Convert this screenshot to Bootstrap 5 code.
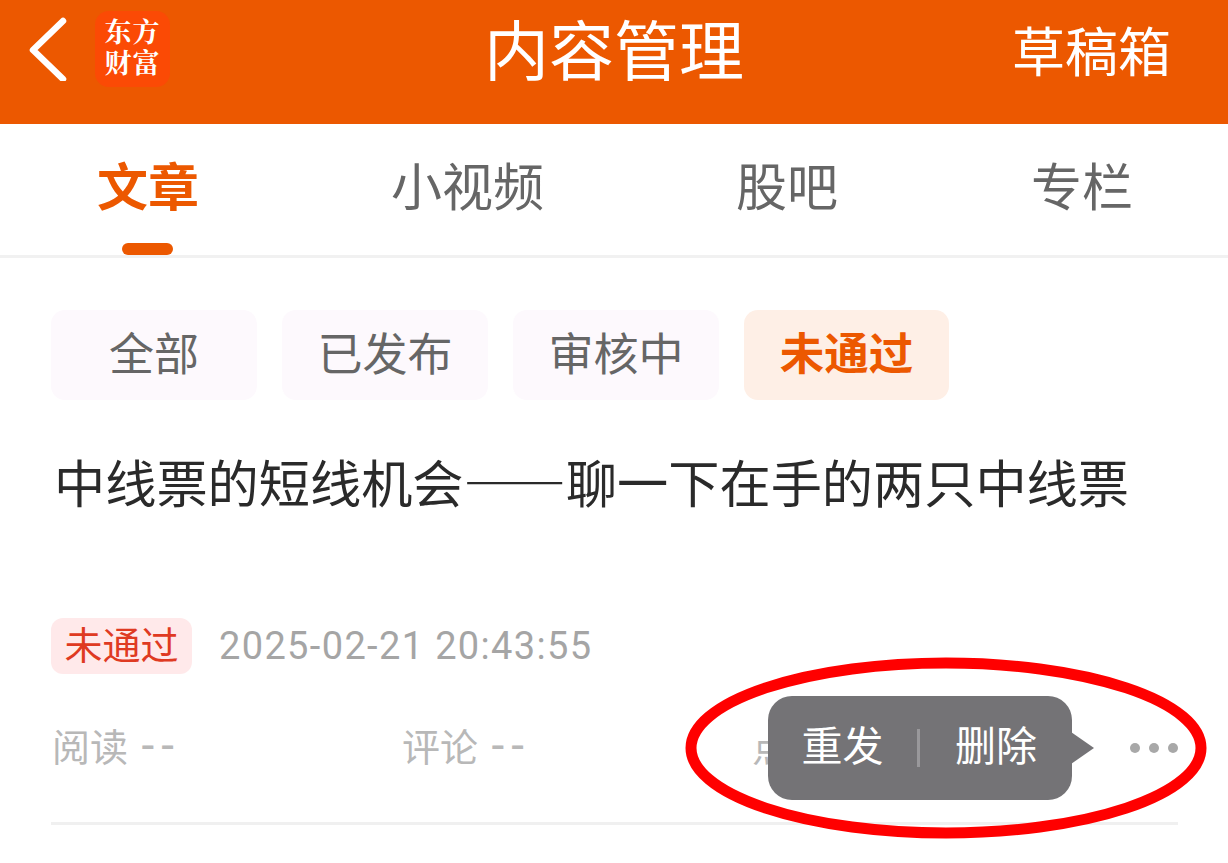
<!DOCTYPE html>
<html lang="zh-CN">
<head>
<meta charset="utf-8">
<title>内容管理</title>
<link href="https://cdn.jsdelivr.net/npm/bootstrap@5.3.0/dist/css/bootstrap.min.css" rel="stylesheet">
<style>
html,body{height:863px;overflow:hidden;background:#fff}
body{font-family:Roboto,"Noto Sans CJK SC",sans-serif;position:relative}
.cjk{font-family:"Noto Sans CJK SC",sans-serif}
.top-bar{height:124px;background:#ec5800;color:#fff;padding:0 57px 26px 28px;position:relative}
.back-ico{width:40px;height:64px;display:block}
.logo-box{width:75px;height:76px;background:#fb4a05;border-radius:14px;margin-left:27px;font:700 27px/31px "Noto Serif CJK SC","Noto Sans CJK SC",sans-serif;letter-spacing:1px;color:#fff;text-align:center;padding-top:4px}
.page-title{position:absolute;left:50%;transform:translateX(-50%);top:6px;font-size:65px;line-height:82px;margin:0;font-weight:400;white-space:nowrap}
.draft{font-size:53px;line-height:53px}
.tab-row{height:134px;border-bottom:3px solid #f1f1f1;position:relative;color:#666}
.tab-cell{font-size:51px;line-height:51px;position:absolute;top:35px}
.tab-on{color:#ec5800;font-weight:700}
.tab-on::after{content:"";position:absolute;left:25px;top:84px;width:51px;height:12px;border-radius:6px;background:#ec5800}
.chip-row{gap:25px;padding:52px 0 0 51px}
.chip-item{width:206px;height:90px;border-radius:14px;background:#fdf9fd;color:#666;font-size:45px;line-height:1;display:flex;align-items:center;justify-content:center;padding-bottom:8px}
.chip-on{background:#feefe6;color:#ec5800;font-weight:700;width:205px;font-size:44.5px}
.art-title{font-size:51.2px;line-height:60px;color:#2a2a2a;margin:51px 0 0 54px;white-space:nowrap;font-weight:400}
.meta-row{margin:107px 0 0 51px;gap:27px}
.state-tag{width:141px;height:56px;background:#ffe9ea;color:#df3a22;border-radius:12px;font-size:38px;line-height:1;display:flex;align-items:center;justify-content:center;padding-bottom:6px}
.stamp{font-size:38px;color:#a5a5a5;line-height:56px;letter-spacing:1.35px}
.stat-row{height:74px;margin:37px 50px 0 52px;position:relative;color:#b8b8b8;font-size:38px;align-items:center}
.stat-item{width:350px;flex:none;white-space:nowrap}
.dash-mark{font-size:46px;line-height:38px;letter-spacing:7px;margin-left:-5px}
.dots{position:absolute;right:0;top:32px;gap:9px}
.dots i{display:block;width:10px;height:10px;border-radius:50%;background:#a8a8a8}
.pop-menu{position:absolute;left:716px;top:-15px;width:304px;height:104px;background:#747376;border-radius:24px;color:#fff;font-size:41px;line-height:1;padding-bottom:10px}
.pop-menu::after{content:"";position:absolute;left:303px;top:36px;border-left:23px solid #747376;border-top:16px solid transparent;border-bottom:16px solid transparent}
.pop-action{width:149px;text-align:center}
.pop-action:last-child{width:152px}
.pop-line{width:3px;height:38px;background:#99989b;flex:none;margin-top:10px}
.rule-line{height:3px;background:#f0f0f0;margin:37px 50px 0 51px}
.red-ring{position:absolute;left:680px;top:652px;width:532px;height:192px;pointer-events:none}
</style>
</head>
<body>
<header class="top-bar d-flex align-items-center cjk">
  <svg class="back-ico" viewBox="0 0 40 64" fill="none" aria-hidden="true"><path d="M35 4 5 33l30 29" stroke="#fff" stroke-width="6.5" stroke-linecap="round" stroke-linejoin="round"/></svg>
  <div class="logo-box">东方<br>财富</div>
  <h1 class="page-title">内容管理</h1>
  <div class="draft ms-auto">草稿箱</div>
</header>
<nav class="tab-row cjk">
  <div class="tab-cell tab-on" style="left:97px">文章</div>
  <div class="tab-cell" style="left:391px">小视频</div>
  <div class="tab-cell" style="left:736px">股吧</div>
  <div class="tab-cell" style="left:1031px">专栏</div>
</nav>
<div class="chip-row d-flex cjk">
  <div class="chip-item">全部</div>
  <div class="chip-item">已发布</div>
  <div class="chip-item">审核中</div>
  <div class="chip-item chip-on">未通过</div>
</div>
<h2 class="art-title cjk">中线票的短线机会——聊一下在手的两只中线票</h2>
<div class="meta-row d-flex align-items-center">
  <span class="state-tag cjk">未通过</span>
  <span class="stamp">2025-02-21 20:43:55</span>
</div>
<div class="stat-row d-flex">
  <span class="stat-item">阅读<span class="dash-mark"> --</span></span>
  <span class="stat-item">评论<span class="dash-mark"> --</span></span>
  <span class="stat-item">点赞<span class="dash-mark"> --</span></span>
  <div class="dots d-flex"><i></i><i></i><i></i></div>
  <div class="pop-menu d-flex align-items-center cjk">
    <span class="pop-action">重发</span><span class="pop-line"></span><span class="pop-action">删除</span>
  </div>
</div>
<div class="rule-line"></div>
<svg class="red-ring" viewBox="0 0 532 192" fill="none" aria-hidden="true"><ellipse cx="266" cy="96" rx="255" ry="85" stroke="#f00" stroke-width="11"/></svg>
<script src="https://cdn.jsdelivr.net/npm/bootstrap@5.3.0/dist/js/bootstrap.bundle.min.js"></script>
</body>
</html>
